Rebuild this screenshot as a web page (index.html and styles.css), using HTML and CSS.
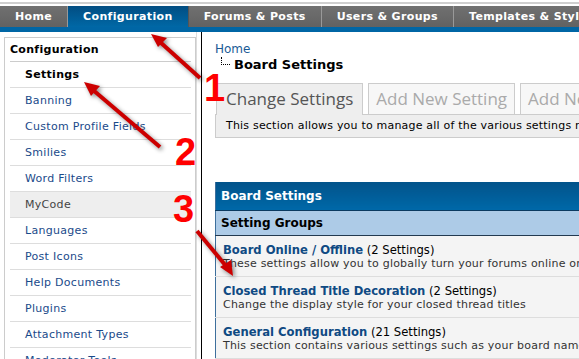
FILE: index.html
```html
<!DOCTYPE html>
<html lang="en">
<head>
    <meta charset="UTF-8">
    <title>Board Settings - Configuration</title>
    <link rel="stylesheet" href="styles.css">
</head>
<body>

    <div class="topstrip"></div>

    <!-- Main admin navigation -->
    <ul class="nav">
        <li><a href="#">Home</a></li>
        <li class="active"><a href="#">Configuration</a></li>
        <li><a href="#">Forums &amp; Posts</a></li>
        <li><a href="#">Users &amp; Groups</a></li>
        <li><a href="#">Templates &amp; Style</a></li>
        <li><a href="#">Tools &amp; Maintenance</a></li>
    </ul>
    <div class="navline"></div>

    <div class="page">
        <div class="side">
            <div class="menu">
                <div class="menu-title">Configuration</div>
                <ul>
                    <li class="current"><a href="#">Settings</a></li>
                    <li><a href="#">Banning</a></li>
                    <li><a href="#">Custom Profile Fields</a></li>
                    <li><a href="#">Smilies</a></li>
                    <li><a href="#">Word Filters</a></li>
                    <li class="hover"><a href="#">MyCode</a></li>
                    <li><a href="#">Languages</a></li>
                    <li><a href="#">Post Icons</a></li>
                    <li><a href="#">Help Documents</a></li>
                    <li><a href="#">Plugins</a></li>
                    <li><a href="#">Attachment Types</a></li>
                    <li><a href="#">Moderator Tools</a></li>
                </ul>
            </div>
        </div>

        <div class="content">
            <div class="crumbs">
                <a href="#">Home</a>
                <div class="crumb-current"><span class="tree"></span>Board Settings</div>
            </div>

            <div class="subtabs">
                <a href="#" class="subtab active">Change Settings</a>
                <a href="#" class="subtab">Add New Setting</a>
                <a href="#" class="subtab">Add New Setting Group</a>
            </div>
            <div class="desc">This section allows you to manage all of the various settings relating to your board.</div>

            <table class="groups">
                <thead>
                    <tr><th>Board Settings</th></tr>
                </thead>
                <tbody>
                    <tr><td class="subhead">Setting Groups</td></tr>
                    <tr>
                        <td>
                            <div class="group-title"><a href="#">Board Online / Offline</a> (2 Settings)</div>
                            <div class="group-desc">These settings allow you to globally turn your forums online or offline.</div>
                        </td>
                    </tr>
                    <tr>
                        <td>
                            <div class="group-title"><a href="#">Closed Thread Title Decoration</a> (2 Settings)</div>
                            <div class="group-desc">Change the display style for your closed thread titles</div>
                        </td>
                    </tr>
                    <tr>
                        <td>
                            <div class="group-title"><a href="#">General Configuration</a> (21 Settings)</div>
                            <div class="group-desc">This section contains various settings such as your board name and url.</div>
                        </td>
                    </tr>
                </tbody>
            </table>
        </div>
    </div>

    <!-- Red step annotations drawn over the screenshot -->
    <svg class="marks" width="579" height="359" viewBox="0 0 579 359">
        <g class="arrows">
            <line x1="200" y1="78" x2="160" y2="42" />
            <polygon points="151,34 167,38 158,47" />
            <line x1="160" y1="147" x2="93" y2="90" />
            <polygon points="84,82 100,86 91,96" />
            <line x1="197" y1="231" x2="226" y2="266" />
            <polygon points="233,276 220,267 231,260" />
        </g>
        <text x="204" y="101">1</text>
        <text x="175" y="165">2</text>
        <text x="173" y="222">3</text>
    </svg>

</body>
</html>
```

FILE: styles.css
```css
html {
    overflow: hidden;
}
body {
    font-family: 'DejaVu Sans', Verdana, sans-serif;
    margin: 0;
    width: 820px;
    color: #000;
    background-color: #fff;
    position: relative;
}
a {
    text-decoration: none;
}
.topstrip {
    height: 6px;
    background: linear-gradient(#fff 0, #fff 2px, #cfcfcf 2px, #cfcfcf 4px, #fff 4px);
}
/* Top navigation */
.nav {
    list-style: none;
    margin: 0;
    padding: 0;
    display: flex;
    height: 21px;
    background: linear-gradient(#707070, #626262);
}
.nav li {
    border-right: 1px solid #999;
}
.nav a {
    display: block;
    padding: 0 15px;
    line-height: 21px;
    font-size: 11px;
    font-weight: bold;
    letter-spacing: 0.35px;
    color: #fff;
}
.nav li.active {
    background: linear-gradient(#024d82, #0068a6);
    border-right-color: #555;
}
.navline {
    height: 5px;
    background-color: #0066a5;
}
.page {
    display: flex;
}
/* Sidebar */
.side {
    width: 197px;
    padding: 5px 0 0 4px;
    box-sizing: border-box;
    border-right: 1px solid #ddd;
    margin-right: 4px;
}
.menu {
    border: 1px solid #ccc;
    border-bottom: none;
    padding: 0 4px 0 5px;
}
.menu-title {
    font-size: 11px;
    font-weight: bold;
    letter-spacing: 0.3px;
    line-height: 23px;
    border-bottom: 1px solid #ccc;
}
.menu ul {
    list-style: none;
    margin: 0;
    padding: 0;
}
.menu li {
    border-bottom: 1px solid #ddd;
}
.menu li a {
    display: block;
    line-height: 25px;
    padding-left: 15px;
    font-size: 11px;
    letter-spacing: 0.3px;
    color: #1a4a8a;
}
.menu li.current a {
    font-weight: bold;
    color: #000;
}
.menu li.hover {
    background-color: #eee;
}
.menu li.hover a {
    color: #444;
}
/* Content */
.content {
    flex: 1;
    border-left: 1px solid #000;
    padding: 6px 0 0 13px;
    min-height: 330px;
}
.crumbs a {
    font-size: 12px;
    line-height: 15px;
    color: #1a5a96;
}
.crumb-current {
    font-size: 13px;
    font-weight: bold;
    line-height: 15px;
    display: flex;
    align-items: flex-start;
}
.tree {
    width: 8px;
    height: 7px;
    margin: 0 4px 0 6px;
    border-left: 1px dotted #000;
    border-bottom: 1px dotted #000;
}
.subtabs {
    display: flex;
    gap: 5px;
    margin-top: 11px;
    margin-left: 1px;
}
.subtab {
    display: block;
    font-family: 'Open Sans', 'Noto Sans', sans-serif;
    font-size: 17px;
    line-height: 30px;
    padding: 0 7px;
    border: 1px solid #ccc;
    border-bottom: none;
    background-color: #f7f7f7;
    color: #aaa;
    white-space: nowrap;
}
.subtab.active {
    background-color: #eee;
    color: #555;
    position: relative;
    margin-bottom: -1px;
    padding: 0 9px 1px;
}
.desc {
    border: 1px solid #ccc;
    background-color: #eee;
    font-size: 11px;
    letter-spacing: 0.2px;
    line-height: 14px;
    padding: 4px 9px 4px 10px;
    white-space: nowrap;
}
/* Setting groups table */
.groups {
    margin-top: 44px;
    width: 100%;
    border-collapse: collapse;
    border-left: 1px solid #3d6f9c;
}
.groups th {
    text-align: left;
    background: linear-gradient(#02538a, #0068a8);
    color: #fff;
    font-size: 12px;
    height: 28px;
    padding: 0 5px;
    border-bottom: 1px solid #0b3a60;
}
.groups td {
    background-color: #f4f4f4;
    border-bottom: 1px solid #ddd;
    padding: 7px 7px 5px;
    white-space: nowrap;
}
.groups td.subhead {
    background-color: #adcbe7;
    font-size: 12px;
    font-weight: bold;
    padding: 0 5px;
    height: 24px;
    border-bottom: 1px solid #233a50;
}
.group-title {
    font-size: 11.6px;
    line-height: 14px;
}
.group-title a {
    font-weight: bold;
    color: #0f4a83;
}
.group-desc {
    font-size: 11px;
    letter-spacing: 0.2px;
    line-height: 14px;
    color: #333;
}
/* Annotation overlay */
.marks {
    position: absolute;
    left: 0;
    top: 0;
    pointer-events: none;
}
.marks .arrows {
    filter: drop-shadow(2px 2px 2px rgba(0, 0, 0, 0.45));
}
.marks line {
    stroke: #c00;
    stroke-width: 4;
}
.marks polygon {
    fill: #c00;
}
.marks text {
    font-family: 'Liberation Sans', Arial, sans-serif;
    font-weight: bold;
    font-size: 38px;
    fill: #f00;
}
```
